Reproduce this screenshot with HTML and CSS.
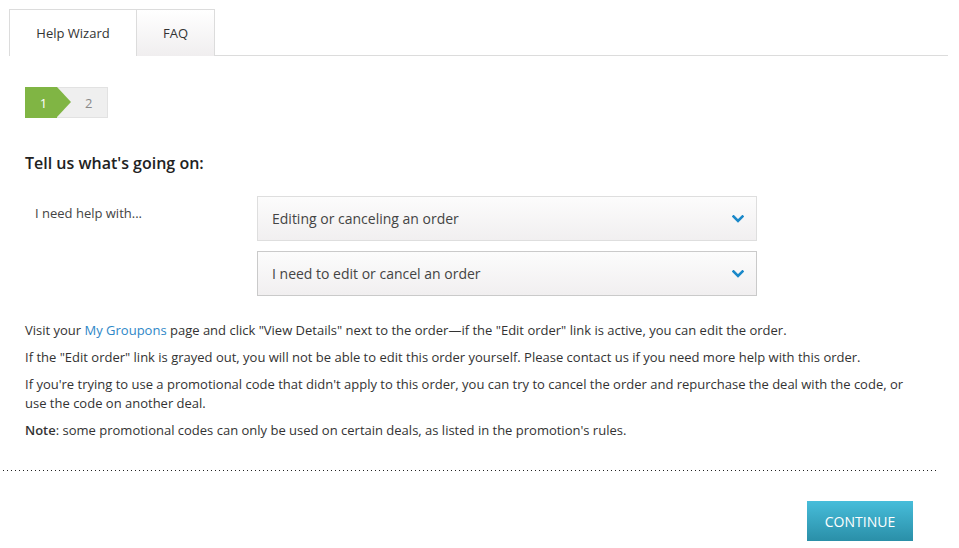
FILE: index.html
```html
<!DOCTYPE html>
<html>
<head>
<meta charset="utf-8">
<link rel="stylesheet" href="styles.css">
</head>
<body>
<div class="page">
  <div class="tabs">
    <div class="tab active">Help Wizard</div>
    <div class="tab">FAQ</div>
  </div>
  <div class="content">
    <div class="steps">
      <div class="step done">1</div>
      <div class="step next">2</div>
    </div>
    <h2 class="heading">Tell us what's going on:</h2>
    <div class="form-row">
      <div class="label">I need help with...</div>
      <div class="selects">
        <div class="select">
          <span>Editing or canceling an order</span>
          <svg class="chev" width="12" height="8" viewBox="0 0 12 8"><path d="M1.5 1.5 L6 6 L10.5 1.5" fill="none" stroke="#1a88c9" stroke-width="2.6" stroke-linecap="square"/></svg>
        </div>
        <div class="select second">
          <span>I need to edit or cancel an order</span>
          <svg class="chev" width="12" height="8" viewBox="0 0 12 8"><path d="M1.5 1.5 L6 6 L10.5 1.5" fill="none" stroke="#1a88c9" stroke-width="2.6" stroke-linecap="square"/></svg>
        </div>
      </div>
    </div>
    <div class="text">
      <p>Visit your <a href="#">My Groupons</a> page and click "View Details" next to the order—if the "Edit order" link is active, you can edit the order.</p>
      <p>If the "Edit order" link is grayed out, you will not be able to edit this order yourself. Please contact us if you need more help with this order.</p>
      <p>If you're trying to use a promotional code that didn't apply to this order, you can try to cancel the order and repurchase the deal with the code, or use the code on another deal.</p>
      <p><strong>Note</strong>: some promotional codes can only be used on certain deals, as listed in the promotion's rules.</p>
    </div>
  </div>
  <div class="dots"></div>
  <div class="actions">
    <button class="btn">CONTINUE</button>
  </div>
</div>
</body>
</html>
```
FILE: styles.css
```css
html, body {
  margin: 0;
  padding: 0;
  background: #fff;
}
body {
  font-family: "Open Sans", "Noto Sans", sans-serif;
  color: #333;
  font-size: 13px;
}
.page {
  width: 959px;
}
.tabs {
  display: flex;
  margin: 9px 11px 0 9px;
  border-bottom: 1px solid #dcdcdc;
}
.tab {
  box-sizing: border-box;
  height: 47px;
  border: 1px solid #dcdcdc;
  border-bottom: none;
  display: flex;
  align-items: center;
  justify-content: center;
  font-size: 13px;
  color: #333;
  background: linear-gradient(#ffffff, #f0eeef);
  width: 79px;
  margin-bottom: -1px;
}
.tab.active {
  width: 127px;
  background: #fff;
  border-right: none;
  height: 47px;
}
.content {
  padding-left: 25px;
}
.steps {
  margin-top: 31px;
  width: 83px;
  height: 31px;
  box-sizing: border-box;
  border: 1px solid #e2e2e2;
  background: #efefef;
  display: flex;
  position: relative;
}
.step {
  display: flex;
  align-items: center;
  font-size: 13px;
}
.step.done {
  width: 32px;
  background: #80b544;
  color: #fff;
  justify-content: center;
  padding-left: 5px;
  box-sizing: border-box;
  position: relative;
  margin: -1px 0 -1px -1px;
}
.step.done::after {
  content: "";
  position: absolute;
  left: 32px;
  top: 0;
  border-top: 15.5px solid transparent;
  border-bottom: 15.5px solid transparent;
  border-left: 14px solid #80b544;
}
.step.next {
  color: #8a8a8a;
  padding-left: 28px;
}
.heading {
  margin: 34px 0 0 0;
  font-size: 16px;
  font-weight: 600;
  line-height: 22px;
  color: #222;
}
.form-row {
  display: flex;
  margin-top: 22px;
}
.label {
  width: 222px;
  padding-left: 10px;
  padding-top: 8px;
  line-height: 19px;
  color: #444;
}
.selects {
  display: flex;
  flex-direction: column;
  gap: 10px;
}
.select {
  box-sizing: border-box;
  width: 500px;
  height: 45px;
  border: 1px solid #dedede;
  background: linear-gradient(#fcfcfc, #f1eff0);
  display: flex;
  align-items: center;
  justify-content: space-between;
  padding: 0 12px 0 14px;
  font-size: 14px;
  color: #444;
}
.select.second {
  border-color: #cacaca;
}
.text {
  margin-top: 25px;
  width: 900px;
}
.text p {
  margin: 0 0 8px 0;
  line-height: 19px;
  color: #333;
}
.text a {
  color: #2e87c7;
  text-decoration: none;
}
.text strong {
  font-weight: 600;
}
.dots {
  margin: 30px 0 0 3px;
  width: 933px;
  height: 2px;
  background-image: repeating-linear-gradient(to right, #222 0 1px, transparent 1px 4px);
  background-size: 100% 1px;
  background-repeat: no-repeat;
}
.actions {
  display: flex;
  justify-content: flex-end;
  padding-right: 46px;
  margin-top: 29px;
}
.btn {
  width: 106px;
  height: 40px;
  border: none;
  background: linear-gradient(#47bdda, #2a8fa8);
  color: #fff;
  font-family: "Open Sans", "Noto Sans", sans-serif;
  font-size: 14px;
  padding: 0;
}
```
